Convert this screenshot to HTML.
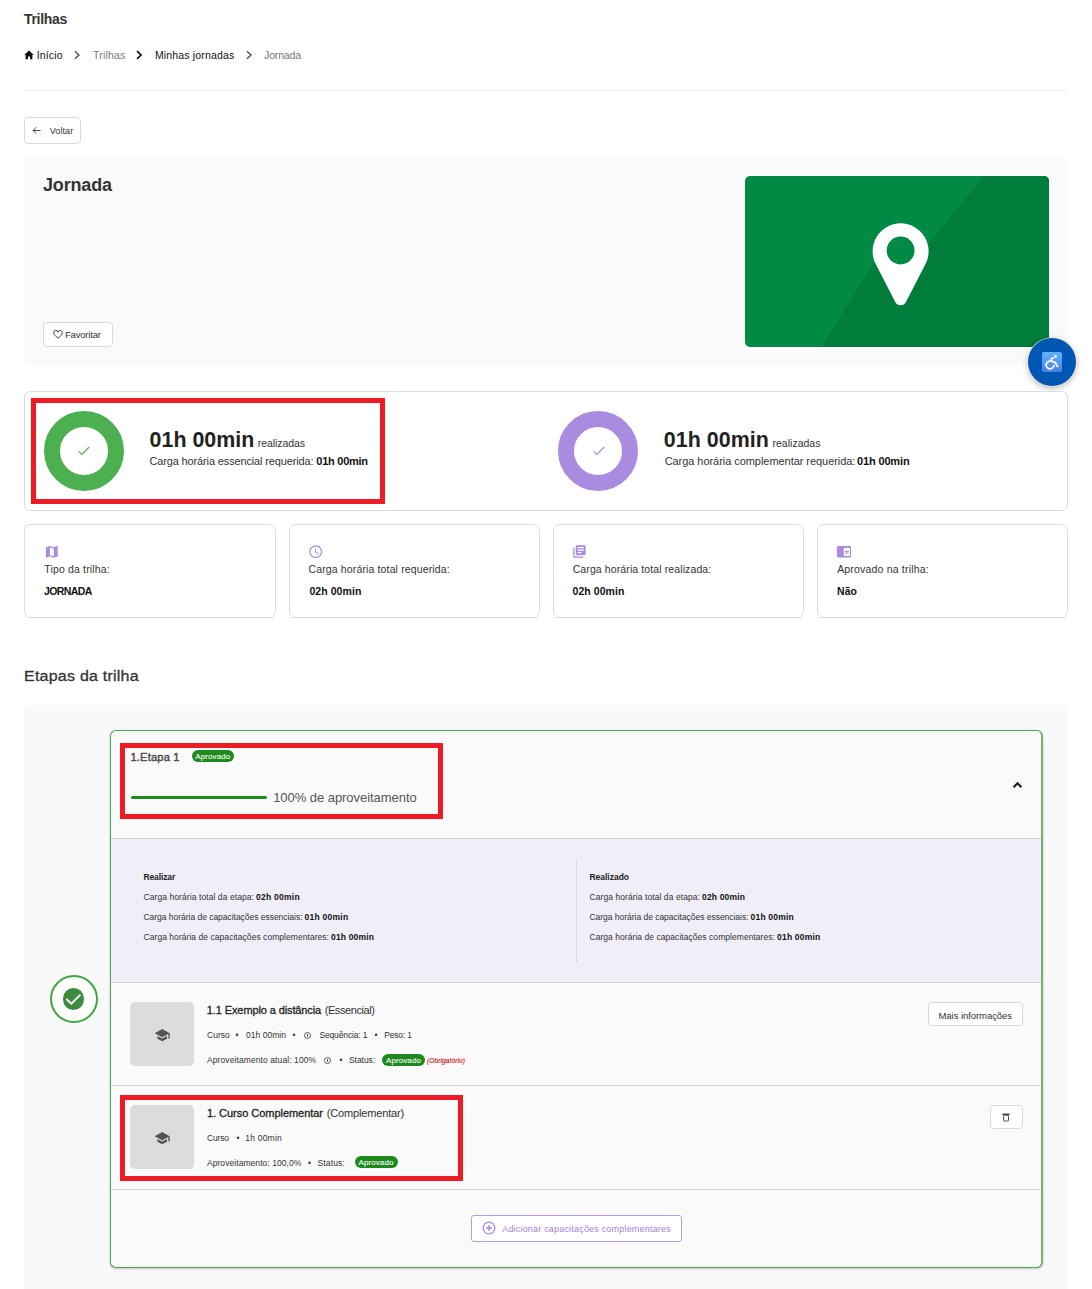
<!DOCTYPE html>
<html lang="pt-BR">
<head>
<meta charset="utf-8">
<title>Trilhas - Jornada</title>
<style>
*{box-sizing:border-box;margin:0;padding:0}
html,body{width:1092px;height:1289px;overflow:hidden;background:#fff}
body{position:relative;font-family:"Liberation Sans",sans-serif;color:#333;font-size:11px}
.a{position:absolute;white-space:nowrap;line-height:1}
.b{font-weight:bold}
.box{position:absolute}
.btn{position:absolute;background:#fff;border:1px solid #d9d9d9;border-radius:4px}
.badge{position:absolute;background:#1e8a1e;color:#fff;border-radius:7px;font-size:8px;line-height:13.200px;height:12px;text-align:center;white-space:nowrap;letter-spacing:0.1px;-webkit-text-stroke:0.08px #fff}
.ic{top:524px;width:251.500px;height:93.500px;background:#fff;border:1px solid #dcdcdc;border-radius:6px}
.sm{font-size:8px;color:#333}
.sm b{color:#111}
.th{width:63.800px;height:63.900px;border-radius:5px;background:#dcdcdc}
.inf{display:inline-block;width:7px;height:7px;border:0.700px solid #5a5a5a;border-radius:50%;vertical-align:-0.500px;position:relative}
.inf:after{content:"";position:absolute;left:2.300px;top:1.200px;width:0.800px;height:3px;background:#5a5a5a}

</style>
</head>
<body>
<!-- HEADER -->
<svg class="box" style="left:24px;top:50px" width="10" height="10" viewBox="0 0 10 10"><path d="M5 0.6 L0.2 5 H1.6 V9.2 H4 V6.4 H6 V9.2 H8.4 V5 H9.8 Z" fill="#111"/></svg>
<svg class="box" style="left:73px;top:50px" width="8" height="10" viewBox="0 0 8 10"><path d="M2 1.2 L6 5 L2 8.8" fill="none" stroke="#444" stroke-width="1.3"/></svg>
<svg class="box" style="left:135px;top:50px" width="8" height="10" viewBox="0 0 8 10"><path d="M2 1.2 L6 5 L2 8.8" fill="none" stroke="#111" stroke-width="1.7"/></svg>
<svg class="box" style="left:245px;top:50px" width="8" height="10" viewBox="0 0 8 10"><path d="M2 1.2 L6 5 L2 8.8" fill="none" stroke="#444" stroke-width="1.3"/></svg>
<div class="box" style="left:24px;top:90px;width:1044px;height:1.400px;background:#f1f1f1"></div>

<!-- VOLTAR -->
<div class="btn" style="left:24px;top:117px;width:57px;height:27px"></div>
<svg class="box" style="left:32px;top:126px" width="9" height="9" viewBox="0 0 9 9"><path d="M8.5 4.5 H1.2 M4.2 1.3 L1 4.5 L4.2 7.7" fill="none" stroke="#444" stroke-width="1"/></svg>

<!-- HERO -->
<div class="box" style="left:24px;top:157px;width:1044px;height:208.600px;background:#fafafa;border-radius:7px"></div>
<div class="btn" style="left:43px;top:322px;width:70px;height:25px"></div>
<svg class="box" style="left:53px;top:330px" width="10" height="9" viewBox="0 0 10 9"><path d="M5 8.2 C2 5.8 0.8 4.5 0.8 3 A2.1 2.1 0 0 1 5 2.2 A2.1 2.1 0 0 1 9.2 3 C9.2 4.5 8 5.8 5 8.2 Z" fill="none" stroke="#333" stroke-width="0.9"/></svg>
<svg class="box" style="left:745px;top:175.600px" width="304" height="171" viewBox="0 0 304 171">
  <defs><clipPath id="hc"><rect width="304" height="171" rx="5"/></clipPath></defs>
  <g clip-path="url(#hc)">
    <rect width="304" height="171" fill="#008a43"/>
    <path d="M239.300 0 L304 0 L304 171 L76.400 171 L129.400 85.800 L182.900 68.300 Z" fill="#007d3a"/>
    <path d="M130.700 88.100 A28 28 0 1 1 180.500 88.100 L160.940 126.100 A6 6 0 0 1 150.260 126.100 Z M155.600 60.900 A13.600 13.600 0 1 0 155.601 60.900 Z" fill="#fff" fill-rule="evenodd"/>
    <circle cx="155.600" cy="74.500" r="13.900" fill="#008a43"/>
  </g>
</svg>

<!-- ACCESSIBILITY FAB -->
<div class="box" style="left:1028px;top:338px;width:48px;height:48px;border-radius:50%;background:#0056b3;box-shadow:0 0 0 0.600px #f3e6d6,0 2px 7px rgba(0,0,0,.3)"></div>
<div class="box" style="left:1042px;top:352.300px;width:20px;height:20px;border-radius:2px;background:linear-gradient(#5fb2ff,#4b80ea)"></div>
<svg class="box" style="left:1042px;top:352.300px" width="20" height="20" viewBox="0 0 20 20"><circle cx="13.400" cy="4.500" r="1.400" fill="#fff"/><path d="M11.300 6.200 C9.500 5.600 8.800 7 9.600 8.300 L10.300 9.600 C12.600 9.600 13.600 10.200 14.200 12 L14.800 14.300 L15.800 14.600" fill="none" stroke="#fff" stroke-width="1.600" stroke-linecap="round" stroke-linejoin="round"/><path d="M8.300 9.100 A3.900 3.900 0 1 0 11.900 13.200" fill="none" stroke="#fff" stroke-width="1.600" stroke-linecap="round"/></svg>

<!-- STATS CARD -->
<div class="box" style="left:24px;top:391px;width:1044px;height:120px;background:#fff;border:1px solid #dcdcdc;border-radius:6px"></div>
<div class="box" style="left:44px;top:411px;width:80px;height:80px;border-radius:50%;border:16px solid #4caf50;background:#fff"></div>
<svg class="box" style="left:77px;top:446px" width="13" height="10" viewBox="0 0 13 10"><path d="M1.500 5.200 L4.800 8.400 L12.200 1" fill="none" stroke="#4caf50" stroke-width="1.100"/></svg>
<div class="box" style="left:31px;top:398px;width:354px;height:106px;border:5px solid #ed1c24"></div>

<div class="box" style="left:558px;top:411px;width:80px;height:80px;border-radius:50%;border:16px solid #a98be0;background:#fff"></div>
<svg class="box" style="left:592px;top:446px" width="13" height="10" viewBox="0 0 13 10"><path d="M1.500 5.200 L4.800 8.400 L12.200 1" fill="none" stroke="#a98be0" stroke-width="1.100"/></svg>

<!-- INFO CARDS -->
<div class="box ic" style="left:24px"></div>
<div class="box ic" style="left:288.500px"></div>
<div class="box ic" style="left:552.500px"></div>
<div class="box ic" style="left:816.500px"></div>
<svg class="box" style="left:43.700px;top:543.700px" width="15.700" height="15.700" viewBox="0 0 24 24"><path fill="#ab8ae0" d="M20.500 3l-.16.030L15 5.100 9 3 3.360 4.900c-.21.070-.36.250-.36.480V20.500c0 .280.220.5.500.5l.160-.030L9 18.900l6 2.100 5.640-1.900c.210-.070.360-.250.360-.480V3.500c0-.280-.220-.5-.5-.5zM15 19l-6-2.110V5l6 2.110V19z"/></svg>
<svg class="box" style="left:307.900px;top:543.900px" width="15.500" height="15.500" viewBox="0 0 24 24"><path fill="#ab8ae0" d="M11.990 2C6.470 2 2 6.480 2 12s4.470 10 9.990 10C17.520 22 22 17.520 22 12S17.520 2 11.990 2zM12 20c-4.420 0-8-3.580-8-8s3.580-8 8-8 8 3.580 8 8-3.580 8-8 8zm.5-13H11v6l5.250 3.150.75-1.230-4.500-2.670z"/></svg>
<svg class="box" style="left:572.250px;top:544.450px" width="14.900" height="14.900" viewBox="0 0 24 24"><path fill="#ab8ae0" d="M4 6H2v14c0 1.100.9 2 2 2h14v-2H4V6zm16-4H8c-1.100 0-2 .9-2 2v12c0 1.100.9 2 2 2h12c1.100 0 2-.9 2-2V4c0-1.100-.9-2-2-2zm-1 9H9V9h10v2zm-4 4H9v-2h6v2zm4-8H9V5h10v2z"/></svg>
<svg class="box" style="left:837.100px;top:546.300px" width="14.100" height="11.400" viewBox="0 0 14.100 11.400"><rect x="0" y="0" width="14.100" height="11.400" rx="1.300" fill="#ab8ae0"/><rect x="6.800" y="1.900" width="6.200" height="8" fill="#fff"/><rect x="7.900" y="4.900" width="4" height="1.100" fill="#ab8ae0"/><rect x="7.900" y="6.600" width="4" height="1.100" fill="#ab8ae0"/></svg>
<!-- ETAPAS -->
<div class="box" style="left:24px;top:705px;width:1044px;height:600px;background:#f9f9f9;border-radius:6px"></div>

<!-- ETAPA CARD -->
<div class="box" style="left:110px;top:730px;width:933px;height:538px;background:#fafafa;border:1px solid #52a356;border-right:2px solid #6db571;border-radius:6px;box-shadow:0 1px 2.500px rgba(0,0,0,.22)"></div>
<div class="badge" id="bd0" style="left:191.600px;top:750px;width:42.500px">Aprovado</div>
<div class="box" style="left:130.500px;top:796px;width:136px;height:3px;border-radius:2px;background:#1e8a1e"></div>
<div class="box" style="left:120px;top:743px;width:323px;height:76px;border:5px solid #ed1c24"></div>
<svg class="box" style="left:1010px;top:778px" width="16" height="14" viewBox="1010 778 16 14"><path d="M1013.600 787.200 L1017.500 783.300 L1021.400 787.200" fill="none" stroke="#1a1a1a" stroke-width="2.100"/></svg>

<div class="box" style="left:111px;top:838px;width:930px;height:1px;background:#d4d4d4"></div>
<div class="box" style="left:111px;top:839px;width:930px;height:143.500px;background:#f0eef8"></div>
<div class="box" style="left:111px;top:982px;width:930px;height:1px;background:#d4d4d4"></div>
<div class="box" style="left:576px;top:859px;width:1px;height:104px;background:#dcdae4"></div>


<!-- check circle -->
<div class="box" style="left:49.500px;top:975px;width:48.200px;height:48.200px;border-radius:50%;border:2.200px solid #3fa843;background:#fff"></div>
<div class="box" style="left:62.800px;top:988.400px;width:21.600px;height:21.600px;border-radius:50%;background:#3d8b40"></div>
<svg class="box" style="left:62px;top:988px" width="24" height="24" viewBox="62 988 24 24"><path d="M66.300 999 L71.400 1003.700 L80.400 994.600" fill="none" stroke="#fff" stroke-width="1.900"/></svg>

<!-- ROW 1 -->
<div class="box th" style="left:130.200px;top:1002.400px"></div>
<svg class="box" style="left:154.300px;top:1026.750px" width="16.400" height="16.400" viewBox="0 0 24 24"><path fill="#555" d="M5 13.180v4L12 21l7-3.820v-4L12 17l-7-3.820zM12 3L1 9l11 6 9-4.910V17h2V9L12 3z"/></svg>
<div class="badge" id="bd1" style="left:382px;top:1054.300px;width:43px">Aprovado</div>
<div class="btn" style="left:928px;top:1002.400px;width:95px;height:24.100px"></div>
<div class="box" style="left:111px;top:1085px;width:930px;height:1px;background:#d4d4d4"></div>

<!-- ROW 2 -->
<div class="box th" style="left:130.200px;top:1105.300px"></div>
<svg class="box" style="left:154.300px;top:1129.650px" width="16.400" height="16.400" viewBox="0 0 24 24"><path fill="#555" d="M5 13.180v4L12 21l7-3.820v-4L12 17l-7-3.820zM12 3L1 9l11 6 9-4.910V17h2V9L12 3z"/></svg>
<div class="badge" id="bd2" style="left:354.500px;top:1156.200px;width:43px">Aprovado</div>
<div class="box" style="left:120px;top:1095px;width:343px;height:86px;border:5px solid #ed1c24"></div>
<div class="btn" style="left:990.300px;top:1105.400px;width:32.500px;height:23.300px"></div>
<svg class="box" style="left:1002px;top:1112.500px" width="8" height="9" viewBox="0 0 8 9"><rect x="0.300" y="0.500" width="7.400" height="1.500" rx="0.400" fill="#4a4a4a"/><rect x="1.600" y="2.300" width="4.900" height="5.700" rx="0.500" fill="none" stroke="#555" stroke-width="1"/></svg>
<div class="box" style="left:111px;top:1188.500px;width:930px;height:1px;background:#d4d4d4"></div>

<!-- ADD BTN -->
<div class="box" style="left:471px;top:1215px;width:211px;height:26.500px;border:1px solid #b79be6;border-radius:3px;background:#fff"></div>
<svg class="box" style="left:482px;top:1221px" width="14" height="14" viewBox="0 0 14 14"><circle cx="7" cy="7" r="5.800" fill="none" stroke="#a585df" stroke-width="1.250"/><path d="M7 4 V10 M4 7 H10" stroke="#a585df" stroke-width="1.350"/></svg>

<div class="inf" style="position:absolute;left:303.5px;top:1031.5px"></div>
<div class="inf" style="position:absolute;left:323.7px;top:1056.5px"></div>
<div class="a" id="t-title" style="left:24.00px;top:12.21px;font-size:14px;font-weight:bold;color:#333;letter-spacing:-0.306px;">Trilhas</div>
<div class="a" id="bc1" style="left:36.66px;top:50.21px;font-size:10.5px;font-weight:normal;color:#111;letter-spacing:0.154px;">Início</div>
<div class="a" id="bc2" style="left:93.09px;top:50.21px;font-size:10.5px;font-weight:normal;color:#777;letter-spacing:0.166px;">Trilhas</div>
<div class="a" id="bc3" style="left:154.96px;top:50.21px;font-size:10.5px;font-weight:normal;color:#111;letter-spacing:0.164px;">Minhas jornadas</div>
<div class="a" id="bc4" style="left:264.11px;top:50.21px;font-size:10.5px;font-weight:normal;color:#777;letter-spacing:-0.178px;">Jornada</div>
<div class="a" id="voltar" style="left:49.78px;top:126.61px;font-size:9px;font-weight:normal;color:#333;letter-spacing:0.069px;">Voltar</div>
<div class="a" id="hero-title" style="left:42.98px;top:176.21px;font-size:18px;font-weight:bold;color:#333;letter-spacing:-0.155px;">Jornada</div>
<div class="a" id="fav" style="left:64.88px;top:330.11px;font-size:9.5px;font-weight:normal;color:#333;letter-spacing:-0.168px;">Favoritar</div>
<div class="a" id="s1a" style="left:149.55px;top:430.01px;font-size:21.4px;font-weight:bold;color:#222;letter-spacing:0.018px;">01h 00min</div>
<div class="a" id="s1b" style="left:257.71px;top:438.00px;font-size:10.5px;font-weight:normal;color:#333;letter-spacing:-0.064px;">realizadas</div>
<div class="a" id="s1c1" style="left:149.46px;top:456.21px;font-size:11px;font-weight:normal;color:#333;letter-spacing:-0.141px;">Carga horária essencial requerida:</div>
<div class="a" id="s1c2" style="left:316.34px;top:456.21px;font-size:11px;font-weight:bold;color:#111;letter-spacing:-0.259px;">01h 00min</div>
<div class="a" id="s2a" style="left:663.80px;top:430.01px;font-size:21.4px;font-weight:bold;color:#222;letter-spacing:0.050px;">01h 00min</div>
<div class="a" id="s2b" style="left:772.50px;top:438.00px;font-size:10.5px;font-weight:normal;color:#333;letter-spacing:0.013px;">realizadas</div>
<div class="a" id="s2c1" style="left:664.65px;top:456.21px;font-size:11px;font-weight:normal;color:#333;letter-spacing:-0.051px;">Carga horária complementar requerida:</div>
<div class="a" id="s2c2" style="left:857.00px;top:456.21px;font-size:11px;font-weight:bold;color:#111;letter-spacing:-0.146px;">01h 00min</div>
<div class="a" id="i1a" style="left:44.19px;top:564.00px;font-size:10.5px;font-weight:normal;color:#333;letter-spacing:0.168px;">Tipo da trilha:</div>
<div class="a" id="i1b" style="left:43.95px;top:586.00px;font-size:10.5px;font-weight:bold;color:#111;letter-spacing:-0.606px;">JORNADA</div>
<div class="a" id="i2a" style="left:308.55px;top:564.00px;font-size:10.5px;font-weight:normal;color:#333;letter-spacing:0.135px;">Carga horária total requerida:</div>
<div class="a" id="i2b" style="left:309.40px;top:586.00px;font-size:10.5px;font-weight:bold;color:#111;letter-spacing:0.071px;">02h 00min</div>
<div class="a" id="i3a" style="left:572.65px;top:564.00px;font-size:10.5px;font-weight:normal;color:#333;letter-spacing:0.110px;">Carga horária total realizada:</div>
<div class="a" id="i3b" style="left:572.50px;top:586.00px;font-size:10.5px;font-weight:bold;color:#111;letter-spacing:0.071px;">02h 00min</div>
<div class="a" id="i4a" style="left:837.15px;top:564.00px;font-size:10.5px;font-weight:normal;color:#333;letter-spacing:0.189px;">Aprovado na trilha:</div>
<div class="a" id="i4b" style="left:837.00px;top:586.00px;font-size:10.5px;font-weight:bold;color:#111;letter-spacing:0.052px;">Não</div>
<div class="a" id="et" style="left:23.85px;top:667.90px;font-size:15.4px;font-weight:normal;color:#333;letter-spacing:0.220px;-webkit-text-stroke:0.3px #333;transform:scaleX(1.04);transform-origin:0 0;">Etapas da trilha</div>
<div class="a" id="e1" style="left:130.43px;top:752.00px;font-size:11.2px;font-weight:normal;color:#4a4a4a;letter-spacing:0.150px;-webkit-text-stroke:0.4px #4a4a4a;">1.Etapa 1</div>
<div class="a" id="e2" style="left:273.18px;top:790.80px;font-size:13px;font-weight:normal;color:#555;letter-spacing:-0.048px;">100% de aproveitamento</div>
<div class="a" id="r1" style="left:143.41px;top:873.42px;font-size:8.5px;font-weight:bold;color:#222;letter-spacing:-0.111px;">Realizar</div>
<div class="a" id="r2a" style="left:143.50px;top:893.01px;font-size:8.5px;font-weight:normal;color:#333;letter-spacing:0.079px;">Carga horária total da etapa:</div>
<div class="a" id="r2b" style="left:256.09px;top:893.01px;font-size:8.5px;font-weight:bold;color:#111;letter-spacing:0.244px;">02h 00min</div>
<div class="a" id="r3a" style="left:143.50px;top:913.31px;font-size:8.5px;font-weight:normal;color:#333;letter-spacing:-0.029px;">Carga horária de capacitações essenciais:</div>
<div class="a" id="r3b" style="left:304.59px;top:913.31px;font-size:8.5px;font-weight:bold;color:#111;letter-spacing:0.244px;">01h 00min</div>
<div class="a" id="r4a" style="left:143.56px;top:933.31px;font-size:8.5px;font-weight:normal;color:#333;letter-spacing:0.048px;">Carga horária de capacitações complementares:</div>
<div class="a" id="r4b" style="left:331.04px;top:933.31px;font-size:8.5px;font-weight:bold;color:#111;letter-spacing:0.156px;">01h 00min</div>
<div class="a" id="q1" style="left:589.50px;top:873.42px;font-size:8.5px;font-weight:bold;color:#222;letter-spacing:-0.021px;">Realizado</div>
<div class="a" id="q2a" style="left:589.50px;top:893.01px;font-size:8.5px;font-weight:normal;color:#333;letter-spacing:0.079px;">Carga horária total da etapa:</div>
<div class="a" id="q2b" style="left:702.00px;top:893.01px;font-size:8.5px;font-weight:bold;color:#111;letter-spacing:0.158px;">02h 00min</div>
<div class="a" id="q3a" style="left:589.50px;top:913.31px;font-size:8.5px;font-weight:normal;color:#333;letter-spacing:-0.029px;">Carga horária de capacitações essenciais:</div>
<div class="a" id="q3b" style="left:750.50px;top:913.31px;font-size:8.5px;font-weight:bold;color:#111;letter-spacing:0.214px;">01h 00min</div>
<div class="a" id="q4a" style="left:589.50px;top:933.31px;font-size:8.5px;font-weight:normal;color:#333;letter-spacing:0.048px;">Carga horária de capacitações complementares:</div>
<div class="a" id="q4b" style="left:777.00px;top:933.31px;font-size:8.5px;font-weight:bold;color:#111;letter-spacing:0.214px;">01h 00min</div>
<div class="a" id="c1a" style="left:206.85px;top:1004.50px;font-size:11px;font-weight:normal;color:#222;letter-spacing:-0.110px;-webkit-text-stroke:0.3px #222;">1.1 Exemplo a distância</div>
<div class="a" id="c1b" style="left:324.73px;top:1004.50px;font-size:11px;font-weight:normal;color:#333;letter-spacing:-0.423px;">(Essencial)</div>
<div class="a" id="c2a" style="left:207.03px;top:1031.01px;font-size:8.5px;font-weight:normal;color:#333;letter-spacing:0.017px;">Curso</div>
<div class="a" id="c2b" style="left:235.50px;top:1031.01px;font-size:8.5px;font-weight:normal;color:#333;letter-spacing:0.016px;">•</div>
<div class="a" id="c2c" style="left:246.04px;top:1031.01px;font-size:8.5px;font-weight:normal;color:#333;letter-spacing:0.031px;">01h 00min</div>
<div class="a" id="c2d" style="left:292.50px;top:1031.01px;font-size:8.5px;font-weight:normal;color:#333;letter-spacing:0.016px;">•</div>
<div class="a" id="c2e" style="left:319.40px;top:1031.01px;font-size:8.5px;font-weight:normal;color:#333;letter-spacing:-0.135px;">Sequência: 1</div>
<div class="a" id="c2f" style="left:374.50px;top:1031.01px;font-size:8.5px;font-weight:normal;color:#333;letter-spacing:0.016px;">•</div>
<div class="a" id="c2g" style="left:384.22px;top:1031.01px;font-size:8.5px;font-weight:normal;color:#333;letter-spacing:-0.182px;">Peso: 1</div>
<div class="a" id="c3a" style="left:206.97px;top:1056.01px;font-size:8.5px;font-weight:normal;color:#333;letter-spacing:0.095px;">Aproveitamento atual: 100%</div>
<div class="a" id="c3b" style="left:339.50px;top:1056.01px;font-size:8.5px;font-weight:normal;color:#333;letter-spacing:0.016px;">•</div>
<div class="a" id="c3c" style="left:348.93px;top:1056.01px;font-size:8.5px;font-weight:normal;color:#333;letter-spacing:-0.029px;">Status:</div>
<div class="a" id="ob" style="left:427.00px;top:1057.50px;font-size:6.5px;font-weight:normal;color:#c8141e;letter-spacing:0.117px;font-style:italic;-webkit-text-stroke:0.15px #c8141e;">(Obrigatório)</div>
<div class="a" id="mi" style="left:938.50px;top:1010.61px;font-size:9.5px;font-weight:normal;color:#333;letter-spacing:-0.060px;">Mais informações</div>
<div class="a" id="d1a" style="left:207.00px;top:1107.61px;font-size:11px;font-weight:normal;color:#222;letter-spacing:-0.037px;-webkit-text-stroke:0.3px #222;">1. Curso Complementar</div>
<div class="a" id="d1b" style="left:326.77px;top:1107.61px;font-size:11px;font-weight:normal;color:#333;letter-spacing:-0.159px;">(Complementar)</div>
<div class="a" id="d2a" style="left:206.94px;top:1134.01px;font-size:8.5px;font-weight:normal;color:#333;letter-spacing:-0.147px;">Curso</div>
<div class="a" id="d2b" style="left:236.40px;top:1134.01px;font-size:8.5px;font-weight:normal;color:#333;letter-spacing:0.016px;">•</div>
<div class="a" id="d2c" style="left:245.19px;top:1134.01px;font-size:8.5px;font-weight:normal;color:#333;letter-spacing:0.226px;">1h 00min</div>
<div class="a" id="d3a" style="left:206.94px;top:1159.31px;font-size:8.5px;font-weight:normal;color:#333;letter-spacing:0.064px;">Aproveitamento: 100,0%</div>
<div class="a" id="d3b" style="left:308.00px;top:1159.31px;font-size:8.5px;font-weight:normal;color:#333;letter-spacing:0.016px;">•</div>
<div class="a" id="d3c" style="left:317.55px;top:1159.31px;font-size:8.5px;font-weight:normal;color:#333;letter-spacing:0.121px;">Status:</div>
<div class="a" id="ad" style="left:502.19px;top:1225.31px;font-size:9px;font-weight:normal;color:#a382de;letter-spacing:0.193px;">Adicionar capacitações complementares</div>

</body>
</html>
